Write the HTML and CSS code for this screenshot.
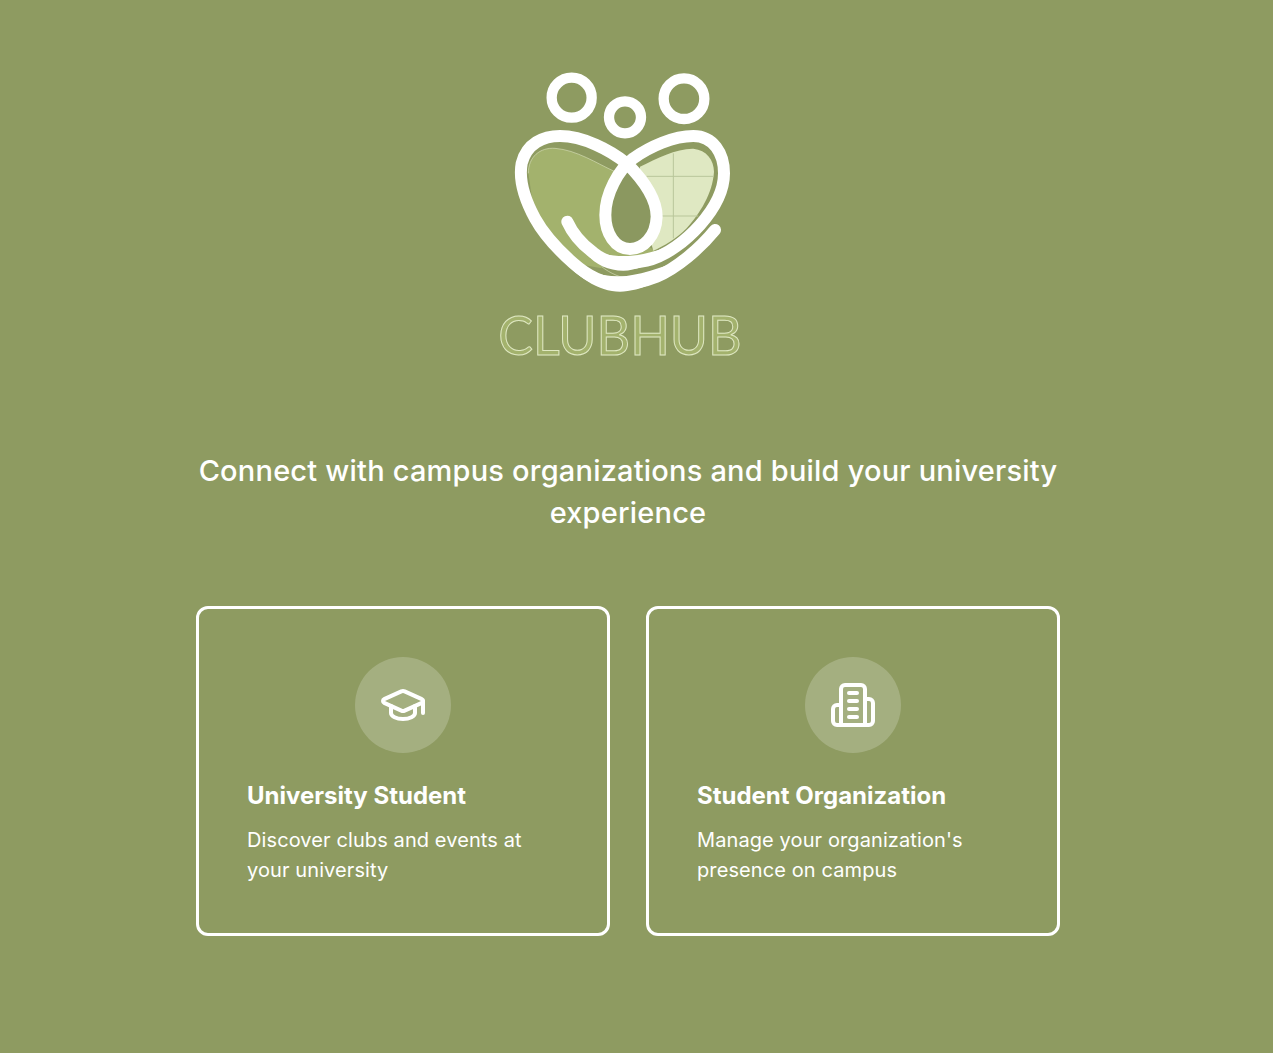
FILE: index.html
```html
<!DOCTYPE html>
<html lang="en">
<head>
  <meta charset="UTF-8">
  <title>ClubHub</title>
  <link rel="stylesheet" href="styles.css">
</head>
<body>

  <main class="page">
    <svg class="logo" viewBox="0 0 810 930" width="270" height="310" aria-label="ClubHub logo">
      <path class="logo-left" d="M115 340 C115 290 150 262 195 265 C260 270 320 310 375 335 L340 470 L500 575 L400 600 L335 610 L335 625 L250 610 L135 475 Z"/>
      <path class="logo-edge" d="M115 340 C115 290 150 262 195 265 C260 270 320 310 375 335"/>
      <path class="logo-edge" d="M335 620 C360 640 395 655 425 658"/>
      <path class="logo-right" d="M450 320 C500 295 560 265 610 266 C650 270 672 300 672 335 C668 400 630 460 590 505 C560 535 520 560 490 572 L440 400 Z"/>
      <path class="logo-grid" d="M470 349 H670 M510 468 H625 M550 280 V535"/>
      <path class="logo-drop" d="M410 320 C450 360 500 410 500 470 C498 530 460 567 420 567 C375 567 346 520 346 465 C346 400 380 350 410 320 Z"/>
      <path class="logo-ribbon" d="M675 510 C630 565 560 625 500 650 C465 664 430 672 390 672 C345 672 295 650 250 610 C205 570 165 530 135 475 C105 420 85 365 95 310 C110 250 160 228 210 228 C280 228 360 270 410 310 C450 350 500 410 500 470 C498 530 460 567 420 567 C375 567 346 520 346 465 C346 400 385 330 430 295 C480 260 550 228 610 228 C670 228 702 280 702 340 C702 400 670 450 630 495 C590 540 530 588 470 602 C445 608 420 610 400 610 C365 610 335 598 310 578 C275 552 250 525 232 485"/>
      <path class="logo-swell" d="M590 595 C530 660 450 695 390 695 C320 695 240 640 190 560 C250 625 320 650 390 649 C440 649 510 625 590 595 Z"/>
      <path class="logo-swell" d="M570 540 C510 600 450 632 400 632 C340 632 290 600 262 540 C300 575 350 588 400 588 C450 588 510 575 570 540 Z"/>
      <circle class="logo-ring" cx="245" cy="113" r="60"/>
      <circle class="logo-ring" cx="405" cy="172" r="48"/>
      <circle class="logo-ring" cx="582" cy="116" r="61"/>
      <text class="logo-name" x="25" y="884" textLength="730" lengthAdjust="spacingAndGlyphs">CLUBHUB</text>
    </svg>

    <p class="tagline">Connect with campus organizations and build your university experience</p>

    <div class="cards">
      <div class="card">
        <div class="card-icon">
          <svg viewBox="0 0 24 24" width="48" height="48">
            <path d="M21.42 10.922a1 1 0 0 0-.019-1.838L12.83 5.18a2 2 0 0 0-1.66 0L2.6 9.08a1 1 0 0 0 0 1.832l8.57 3.908a2 2 0 0 0 1.66 0z"/>
            <path d="M22 10v6"/>
            <path d="M6 12.5V16a6 3 0 0 0 12 0v-3.5"/>
          </svg>
        </div>
        <h3>University Student</h3>
        <p>Discover clubs and events at your university</p>
      </div>
      <div class="card">
        <div class="card-icon">
          <svg viewBox="0 0 24 24" width="48" height="48">
            <path d="M6 22V4a2 2 0 0 1 2-2h8a2 2 0 0 1 2 2v18Z"/>
            <path d="M6 12H4a2 2 0 0 0-2 2v6a2 2 0 0 0 2 2h2"/>
            <path d="M18 9h2a2 2 0 0 1 2 2v9a2 2 0 0 1-2 2h-2"/>
            <path d="M10 6h4"/>
            <path d="M10 10h4"/>
            <path d="M10 14h4"/>
            <path d="M10 18h4"/>
          </svg>
        </div>
        <h3>Student Organization</h3>
        <p>Manage your organization's presence on campus</p>
      </div>
    </div>
  </main>

</body>
</html>
```

FILE: styles.css
```css
* {
  box-sizing: border-box;
}
body {
  margin: 0;
  min-height: 1053px;
  background-color: #8e9b61;
  color: white;
  font-family: Inter, "Open Sans", sans-serif;
}
.page {
  width: 864px;
  margin-left: 196px;
  padding-top: 60px;
  display: flex;
  flex-direction: column;
  align-items: center;
}
.logo {
  display: block;
  margin-left: -6px;
}
.logo-left {
  fill: #a3b26d;
}
.logo-edge {
  fill: none;
  stroke: #d5ddb5;
  stroke-width: 2;
}
.logo-right {
  fill: #dfe8c2;
}
.logo-grid {
  fill: none;
  stroke: #b9c69a;
  stroke-width: 3;
}
.logo-drop {
  fill: #8b9860;
}
.logo-ribbon {
  fill: none;
  stroke: white;
  stroke-width: 36;
  stroke-linecap: round;
  stroke-linejoin: round;
}
.logo-swell {
  fill: white;
}
.logo-ring {
  fill: none;
  stroke: white;
  stroke-width: 31;
}
.logo-name {
  font-family: Lato, sans-serif;
  font-weight: 400;
  font-size: 160px;
  fill: #a3b26d;
  stroke: #dfe8c2;
  stroke-width: 3;
}
.tagline {
  width: 100%;
  margin: 80px 0 0;
  font-size: 29px;
  font-weight: 500;
  letter-spacing: 0.2px;
  line-height: 42px;
  text-align: center;
}
.cards {
  width: 100%;
  margin-top: 72px;
  display: grid;
  grid-template-columns: 414px 414px;
  gap: 36px;
}
.card {
  height: 330px;
  padding: 48px 48px;
  border: 3px solid white;
  border-radius: 12px;
}
.card-icon {
  width: 96px;
  height: 96px;
  margin: 0 auto 27px;
  border-radius: 50%;
  background: rgba(255,255,255,0.2);
  display: flex;
  align-items: center;
  justify-content: center;
}
.card-icon svg {
  fill: none;
  stroke: white;
  stroke-width: 2;
  stroke-linecap: round;
  stroke-linejoin: round;
}
.card h3 {
  margin: 0 0 13px;
  font-size: 24px;
  font-weight: 700;
  line-height: 32px;
}
.card p {
  margin: 0;
  font-size: 20px;
  letter-spacing: 0.1px;
  line-height: 30px;
}
```
